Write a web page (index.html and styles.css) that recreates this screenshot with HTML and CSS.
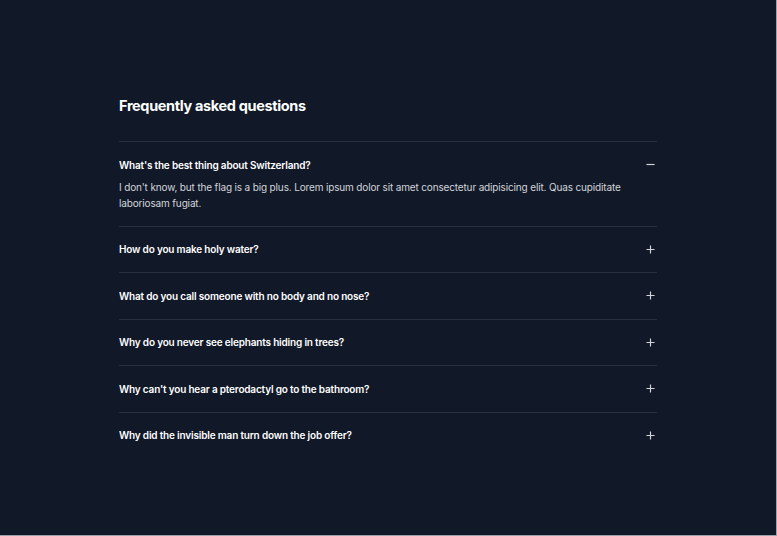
FILE: index.html
```html
<!DOCTYPE html>
<html lang="en">
<head>
<meta charset="utf-8">
<title>FAQ</title>
<link rel="stylesheet" href="styles.css">
</head>
<body>
<div class="page">
  <section class="faq">
    <h2 class="faq-title">Frequently asked questions</h2>
    <dl class="faq-list">
      <div class="faq-item">
        <dt class="faq-q"><span>What's the best thing about Switzerland?</span>
          <svg class="icon" viewBox="0 0 10 10"><path d="M0.5 5h9"/></svg></dt>
        <dd class="faq-a">I don't know, but the flag is a big plus. Lorem ipsum dolor sit amet consectetur adipisicing elit. Quas cupiditate laboriosam fugiat.</dd>
      </div>
      <div class="faq-item">
        <dt class="faq-q"><span>How do you make holy water?</span>
          <svg class="icon" viewBox="0 0 10 10"><path d="M0.5 5h9M5 0.5v9"/></svg></dt>
      </div>
      <div class="faq-item">
        <dt class="faq-q"><span>What do you call someone with no body and no nose?</span>
          <svg class="icon" viewBox="0 0 10 10"><path d="M0.5 5h9M5 0.5v9"/></svg></dt>
      </div>
      <div class="faq-item">
        <dt class="faq-q"><span>Why do you never see elephants hiding in trees?</span>
          <svg class="icon" viewBox="0 0 10 10"><path d="M0.5 5h9M5 0.5v9"/></svg></dt>
      </div>
      <div class="faq-item">
        <dt class="faq-q"><span>Why can't you hear a pterodactyl go to the bathroom?</span>
          <svg class="icon" viewBox="0 0 10 10"><path d="M0.5 5h9M5 0.5v9"/></svg></dt>
      </div>
      <div class="faq-item">
        <dt class="faq-q"><span>Why did the invisible man turn down the job offer?</span>
          <svg class="icon" viewBox="0 0 10 10"><path d="M0.5 5h9M5 0.5v9"/></svg></dt>
      </div>
    </dl>
  </section>
</div>
</body>
</html>
```
FILE: styles.css
```css
* { box-sizing: border-box; }
html, body { margin: 0; padding: 0; }
body {
  background: #111827;
  font-family: Inter, "Noto Sans", sans-serif;
  color: #fff;
}
.page {
  width: 777px;
  height: 536px;
  border-right: 1px solid #9ca0a8;
  border-bottom: 1px solid #9ca0a8;
  padding-top: 96px;
}
.faq {
  width: 538px;
  margin: 0 0 0 119px;
}
.faq-title {
  margin: 0 0 25px;
  font-size: 14.5px;
  line-height: 20px;
  font-weight: 700;
  letter-spacing: -0.35px;
}
.faq-list { margin: 0; }
.faq-item {
  border-top: 1px solid rgba(255,255,255,0.1);
  padding: 14.5px 0 15px;
}
.faq-q {
  display: flex;
  justify-content: space-between;
  align-items: center;
  font-size: 10px;
  line-height: 16px;
  font-weight: 600;
  letter-spacing: -0.18px;
  color: #fff;
}
.icon {
  width: 9px;
  height: 9px;
  margin-right: 2.5px;
  stroke: #d1d5db;
  stroke-width: 1.3;
  fill: none;
}
.faq-a {
  margin: 6px 0 0;
  padding-right: 30px;
  font-size: 10px;
  line-height: 16px;
  letter-spacing: -0.15px;
  color: #d1d5db;
}
```
